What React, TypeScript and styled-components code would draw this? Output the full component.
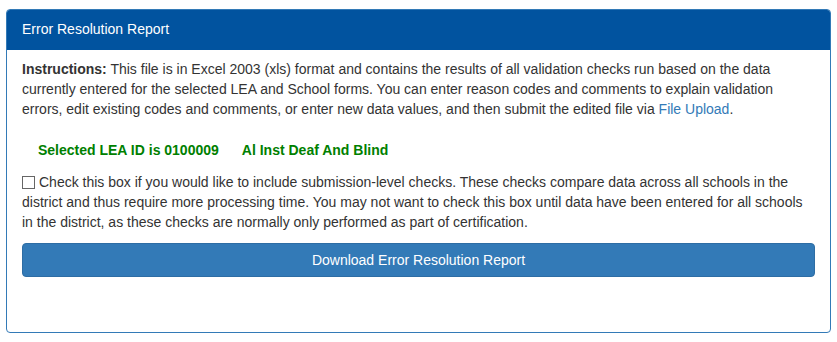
import React from "react";
import styled, { createGlobalStyle } from "styled-components";

const GlobalStyle = createGlobalStyle`
  html, body {
    margin: 0;
    padding: 0;
    background: #ffffff;
  }
  body {
    font-family: "Liberation Sans", Arial, sans-serif;
    font-size: 14px;
    line-height: 20px;
    color: #333333;
  }
`;

const Page = styled.div`
  padding: 9px 6px 0 6px;
  width: 825px;
`;

const Panel = styled.section`
  border: 1px solid #337ab7;
  border-radius: 4px;
  background: #ffffff;
  height: 324px;
  box-sizing: border-box;
  overflow: hidden;
`;

const PanelHeading = styled.header`
  background: #01539f;
  color: #ffffff;
  padding: 10px 15px 10px 15px;
  border-bottom: 1px solid #01539f;
  margin: -1px -1px 0 -1px;
  border-radius: 3px 3px 0 0;
`;

const PanelTitle = styled.h3`
  margin: 0;
  font-size: 14px;
  font-weight: normal;
  line-height: 20px;
  padding-left: 1px;
`;

const PanelBody = styled.div`
  padding: 9px 15px 15px 15px;
`;

const Instructions = styled.p`
  margin: 0;
`;

const Link = styled.a`
  color: #337ab7;
  text-decoration: none;
`;

const SelectedRow = styled.div`
  display: flex;
  gap: 23px;
  padding-left: 16px;
  margin-top: 21px;
  color: #008000;
  font-weight: bold;
`;

const CheckRow = styled.p`
  margin: 12px 0 0 0;
`;

const CheckBox = styled.input`
  appearance: none;
  -webkit-appearance: none;
  width: 13px;
  height: 13px;
  margin: 0 4px 0 0;
  border: 1px solid #666666;
  border-radius: 0;
  background: #ffffff;
  box-sizing: border-box;
  vertical-align: -2px;
`;

const DownloadButton = styled.button`
  display: block;
  width: 100%;
  margin-top: 11px;
  height: 34px;
  background: #337ab7;
  border: 1px solid #2e6da4;
  border-radius: 4px;
  color: #ffffff;
  font-family: "Liberation Sans", Arial, sans-serif;
  font-size: 14px;
  line-height: 20px;
  cursor: pointer;
`;

export default function App() {
  return (
    <>
      <GlobalStyle />
      <Page>
        <Panel>
          <PanelHeading>
            <PanelTitle>Error Resolution Report</PanelTitle>
          </PanelHeading>
          <PanelBody>
            <Instructions>
              <strong>Instructions:</strong> This file is in Excel 2003 (xls) format and contains the results of all validation checks run based on the data currently entered for the selected LEA and School forms. You can enter reason codes and comments to explain validation errors, edit existing codes and comments, or enter new data values, and then submit the edited file via{" "}
              <Link href="#">File Upload</Link>.
            </Instructions>
            <SelectedRow>
              <span>Selected LEA ID is 0100009</span>
              <span>Al Inst Deaf And Blind</span>
            </SelectedRow>
            <CheckRow>
              <CheckBox type="checkbox" />
              Check this box if you would like to include submission-level checks. These checks compare data across all schools in the district and thus require more processing time. You may not want to check this box until data have been entered for all schools in the district, as these checks are normally only performed as part of certification.
            </CheckRow>
            <DownloadButton type="button">Download Error Resolution Report</DownloadButton>
          </PanelBody>
        </Panel>
      </Page>
    </>
  );
}
